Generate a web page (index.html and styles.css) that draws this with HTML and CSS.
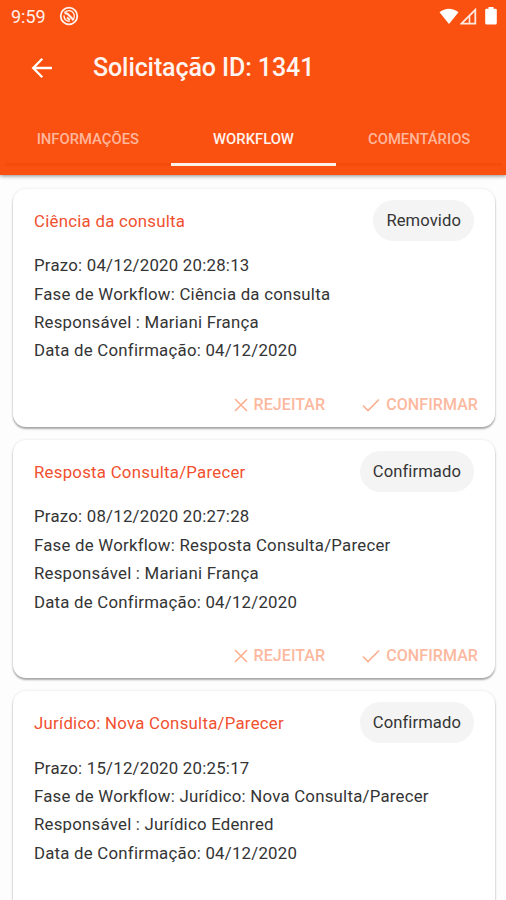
FILE: index.html
```html
<!DOCTYPE html>
<html lang="pt-BR">
<head>
<meta charset="utf-8">
<title>Solicitação ID: 1341</title>
<link rel="stylesheet" href="styles.css">
</head>
<body>
<header class="header">
  <div class="status">
    <span class="clock">9:59</span>
    <svg class="status-app" viewBox="0 0 20 20" fill="none" stroke="#fff3ee">
      <circle cx="10" cy="10" r="8.300" stroke-width="1.800"/>
      <path d="M5.500 6.500Q8 4 11.500 4.800Q15.500 6.300 15.300 10.500Q15 13 13.500 14.500M5 9.500Q4.800 13 7.800 14.700Q9.500 15.500 11 15" stroke-width="1.300"/>
      <path d="M5.500 7.500Q7.500 6.800 9 8.300L14.500 14M8 11.500L11 14" stroke-width="2"/>
    </svg>
    <span class="spacer"></span>
    <svg class="wifi" viewBox="0 0 20 17"><path d="M.5 4.200C6 -.5 14 -.5 19.500 4.200L10 16Z" fill="#fff"/></svg>
    <svg class="signal" viewBox="0 0 17 17"><path d="M1.500 15.600H15.300V1.800Z" fill="none" stroke="#ffe9df" stroke-width="1.800"/><path d="M9.500 8V15.500" stroke="#ffe9df" stroke-width="1.600"/></svg>
    <svg class="battery" viewBox="0 0 12 18"><path d="M3.500 0H8.500V1.800H10.500Q11.800 1.800 11.800 3.100V16Q11.800 17.500 10.300 17.500H1.700Q.2 17.500 .2 16V3.100Q.2 1.800 1.500 1.800H3.500Z" fill="#fff"/></svg>
  </div>
  <div class="appbar">
    <svg class="back" viewBox="0 0 22 22" fill="none" stroke="#fff" stroke-width="2.300"><path d="M21 11H3M11.300 1.800L2.200 11L11.300 20.200"/></svg>
    <h1 class="title">Solicitação ID: 1341</h1>
  </div>
  <nav class="tabs">
    <a class="tab">INFORMAÇÕES</a>
    <a class="tab tab-active">WORKFLOW</a>
    <a class="tab">COMENTÁRIOS</a>
  </nav>
</header>
<main class="list">
  <article class="card">
    <div class="card-head"><h2 class="card-title">Ciência da consulta</h2><span class="chip">Removido</span></div>
    <div class="details">
      <p>Prazo: 04/12/2020 20:28:13</p>
      <p>Fase de Workflow: Ciência da consulta</p>
      <p>Responsável : Mariani França</p>
      <p>Data de Confirmação: 04/12/2020</p>
    </div>
    <div class="actions">
      <span class="action"><svg class="x" viewBox="0 0 14 14"><path d="M1 1L13 13M13 1L1 13"/></svg>REJEITAR</span>
      <span class="action"><svg class="check" viewBox="0 0 18 14"><path d="M1 7.500L6 12.500L17 1.500"/></svg>CONFIRMAR</span>
    </div>
  </article>
  <article class="card">
    <div class="card-head"><h2 class="card-title">Resposta Consulta/Parecer</h2><span class="chip">Confirmado</span></div>
    <div class="details">
      <p>Prazo: 08/12/2020 20:27:28</p>
      <p>Fase de Workflow: Resposta Consulta/Parecer</p>
      <p>Responsável : Mariani França</p>
      <p>Data de Confirmação: 04/12/2020</p>
    </div>
    <div class="actions">
      <span class="action"><svg class="x" viewBox="0 0 14 14"><path d="M1 1L13 13M13 1L1 13"/></svg>REJEITAR</span>
      <span class="action"><svg class="check" viewBox="0 0 18 14"><path d="M1 7.500L6 12.500L17 1.500"/></svg>CONFIRMAR</span>
    </div>
  </article>
  <article class="card">
    <div class="card-head"><h2 class="card-title">Jurídico: Nova Consulta/Parecer</h2><span class="chip">Confirmado</span></div>
    <div class="details">
      <p>Prazo: 15/12/2020 20:25:17</p>
      <p>Fase de Workflow: Jurídico: Nova Consulta/Parecer</p>
      <p>Responsável : Jurídico Edenred</p>
      <p>Data de Confirmação: 04/12/2020</p>
    </div>
  </article>
</main>
</body>
</html>
```
FILE: styles.css
```css
* { box-sizing: border-box; margin: 0; padding: 0; }
body {
  height: 900px;
  overflow: hidden;
  display: flex;
  flex-direction: column;
  background: #fdfdfd;
  font-family: Roboto, "Liberation Sans", sans-serif;
  color: #343434;
}
.header {
  flex: none;
  height: 175px;
  background: #fa5010;
  box-shadow: 0 1px 4px rgba(0, 0, 0, .45);
  z-index: 1;
}
.status { height: 32px; display: flex; align-items: center; padding: 0 9px 0 11px; }
.clock { width: 48px; font-size: 18px; line-height: 32px; color: #fff0ea; padding-top: 1px; }
.status-app { width: 20px; height: 20px; }
.spacer { flex: 1; }
.wifi { width: 20px; height: 17px; }
.signal { width: 17px; height: 17px; margin: 0 8px 0 1px; }
.battery { width: 12px; height: 18px; }
.appbar { height: 72px; display: flex; align-items: center; padding-left: 31px; }
.back { width: 22px; height: 22px; }
.title { margin-left: 40px; color: #fff5f0; font-size: 25px; font-weight: 500; line-height: 30px; letter-spacing: -.1px; }
.tabs { height: 62px; margin: 0 4px 0 5px; display: grid; grid-template-columns: repeat(3, 1fr); }
.tab { height: 62px; padding-top: 26px; line-height: 18px; text-align: center; font-size: 14.800px; font-weight: 500; color: #ffb79c; border-bottom: 3px solid #f54b0d; }
.tab-active { color: #fff3ee; border-color: #fff0ea; }
.list { padding: 13.500px 11px 0 13px; display: flex; flex-direction: column; gap: 13px; }
.card {
  flex: none;
  height: 238.200px;
  padding: 11.500px 17px 0 21px;
  border-radius: 13px;
  background: #fff;
  box-shadow: 0 2px 2px rgba(0, 0, 0, .32), 0 0 3px rgba(0, 0, 0, .1);
}
.card-head { height: 41px; display: flex; justify-content: space-between; align-items: center; margin-right: 4px; }
.card-title { font-size: 16.800px; font-weight: 400; color: #f1502f; letter-spacing: .26px; }
.chip { height: 41px; padding: 0 13px; border-radius: 21px; background: #f4f4f4; font-size: 16.600px; line-height: 41px; letter-spacing: .1px; }
.details { margin-top: 10.200px; font-size: 16.800px; line-height: 28.400px; letter-spacing: .24px; white-space: nowrap; }
.actions { margin-top: 28.200px; display: flex; justify-content: flex-end; gap: 37px; }
.action { display: flex; align-items: center; line-height: 24px; font-size: 16px; font-weight: 500; color: #fcb99f; letter-spacing: .08px; }
.action svg { fill: none; stroke: #fcb08f; stroke-width: 1.600; }
.x { width: 14px; height: 14px; margin-right: 6px; }
.check { width: 18px; height: 14px; margin-right: 6px; }
```
